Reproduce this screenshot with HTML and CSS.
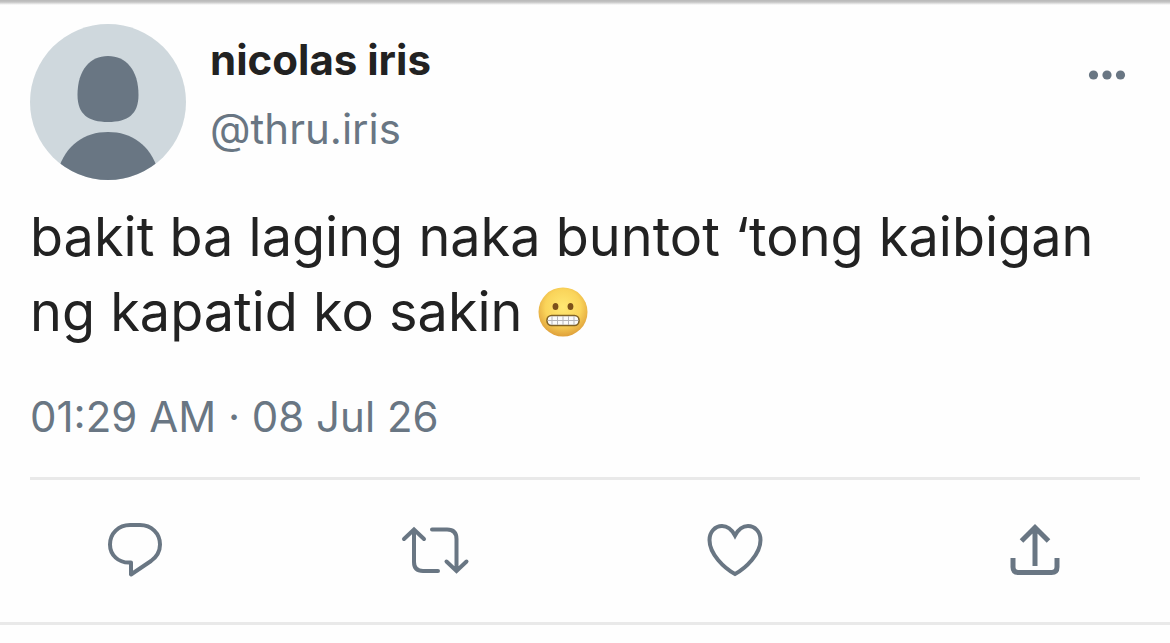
FILE: index.html
```html
<!DOCTYPE html>
<html lang="tl">

<head>
    <meta charset="UTF-8">
    <meta name="viewport" content="width=device-width, initial-scale=1.0">
    <title>nicolas iris</title>
    <link rel="stylesheet" href="styles.css">
</head>

<body>
    <article class="tweet">
        <header class="header">
            <svg class="avatar" viewBox="0 0 156 156" aria-hidden="true">
                <clipPath id="avatar-clip">
                    <circle cx="78" cy="78" r="78" />
                </clipPath>
                <g clip-path="url(#avatar-clip)">
                    <rect width="156" height="156" fill="#cfd8dd" />
                    <path fill="#697683" d="M78 32C96 32 108.500 46 108.500 71C108.500 90 98 98 78 98C58 98 47.500 90 47.500 71C47.500 46 60 32 78 32Z" />
                    <path fill="#697683" d="M28 146C36 121 54 108 78 108C102 108 120 121 128 146V160H28Z" />
                </g>
            </svg>
            <div class="names">
                <h1 class="name">nicolas iris</h1>
                <a class="handle" href="#">@thru.iris</a>
            </div>
            <button class="more" type="button" aria-label="More">
                <svg viewBox="0 0 38 10" width="38" height="10">
                    <circle cx="5.500" cy="5" r="4.600" />
                    <circle cx="19" cy="5" r="4.600" />
                    <circle cx="32.500" cy="5" r="4.600" />
                </svg>
            </button>
        </header>

        <p class="text">bakit ba laging naka buntot ‘tong kaibigan ng kapatid ko sakin
            <svg class="emoji" viewBox="0 0 50 50" role="img" aria-label="grimacing face">
                <defs>
                    <radialGradient id="face" cx="50%" cy="40%" r="60%">
                        <stop offset="0" stop-color="#ffe873" />
                        <stop offset="0.600" stop-color="#fad45a" />
                        <stop offset="1" stop-color="#dfa03a" />
                    </radialGradient>
                </defs>
                <circle cx="25" cy="25" r="24.500" fill="url(#face)" />
                <ellipse cx="17.500" cy="19.500" rx="2.900" ry="3.600" fill="#7c501a" />
                <ellipse cx="32.500" cy="19.500" rx="2.900" ry="3.600" fill="#7c501a" />
                <rect x="9" y="28.500" width="32" height="10" rx="4.500" fill="#fafafa" stroke="#816326" stroke-width="1.600" />
                <path d="M9.500 33.500H40.500M14 29V38M19.500 29V38M25 29V38M30.500 29V38M36 29V38" stroke="#b5b5b8" stroke-width="1" />
            </svg>
        </p>

        <time class="date" datetime="2026-07-08T01:29">01:29 AM · 08 Jul 26</time>

        <div class="actions">
            <button type="button" aria-label="Reply">
                <svg viewBox="0 0 90 90">
                    <path d="M40 20H50C61.500 20 70 28.500 70 39.500C70 46.500 66.500 52 61 56L41 69.500V57.500C28 58.500 20 49.500 20 39.500C20 28.500 28.500 20 40 20Z" stroke-width="4" stroke-linejoin="round" />
                </svg>
            </button>
            <button type="button" aria-label="Retweet">
                <svg viewBox="0 0 90 90">
                    <path d="M14 34L24 24.500L34 34M24 25.500V57Q24 66 33 66H48M42 24.500H57Q66.500 24.500 66.500 34V65M56.500 56.500L66.500 66L76.500 56.500" stroke-width="4" stroke-linecap="round" />
                </svg>
            </button>
            <button type="button" aria-label="Like">
                <svg viewBox="0 0 90 90">
                    <path d="M45 30.500C41.500 24 37 21 32 21C25 21 19.500 27 19.500 35C19.500 49 34 63 45 69C56 63 70.500 49 70.500 35C70.500 27 65 21 58 21C53 21 48.500 24 45 30.500Z" stroke-width="4" />
                </svg>
            </button>
            <button type="button" aria-label="Share">
                <svg viewBox="0 0 90 90">
                    <path d="M45 61V23M31.500 36L45 22.500L58.500 36M23 53V62Q23 67.500 28.500 67.500H61.500Q67 67.500 67 62V53" stroke-width="5" />
                </svg>
            </button>
        </div>
    </article>
</body>

</html>
```

FILE: styles.css
```css
* {
    margin: 0;
    padding: 0;
    box-sizing: border-box;
    font-family: Inter, "Liberation Sans", sans-serif;
}

body {
    background-color: #fefefe;
    color: #222;
}

button {
    background: none;
    border: none;
    cursor: pointer;
}

.tweet {
    padding: 24px 30px 0;
    border-bottom: 3px solid #e9e9e9;
    background: linear-gradient(#b8b8b8, #c4c4c4 2px, #fefefe 5px);
}

.header {
    display: flex;
    gap: 24px;
}

.avatar {
    width: 156px;
    height: 156px;
    flex-shrink: 0;
}

.names {
    flex: 1;
    padding-top: 1px;
}

.name,
.handle {
    display: block;
    font-size: 42px;
    line-height: 69px;
}

.name {
    font-weight: 700;
}

.handle {
    color: #697683;
    text-decoration: none;
}

.more {
    align-self: flex-start;
    padding: 46px 14px 10px;
    fill: #697683;
}

.more svg {
    display: block;
}

.text {
    margin-top: 19px;
    font-size: 54px;
    line-height: 75px;
}

.emoji {
    width: 50px;
    height: 50px;
    vertical-align: -6px;
}

.date {
    display: block;
    padding: 38px 0 30px;
    font-size: 42px;
    line-height: 60px;
    color: #697683;
}

.actions {
    display: flex;
    justify-content: space-between;
    padding: 25px 60px 27px;
    border-top: 3px solid #e9e9e9;
}

.actions svg {
    display: block;
    width: 90px;
    height: 90px;
    fill: none;
    stroke: #697683;
}
```
